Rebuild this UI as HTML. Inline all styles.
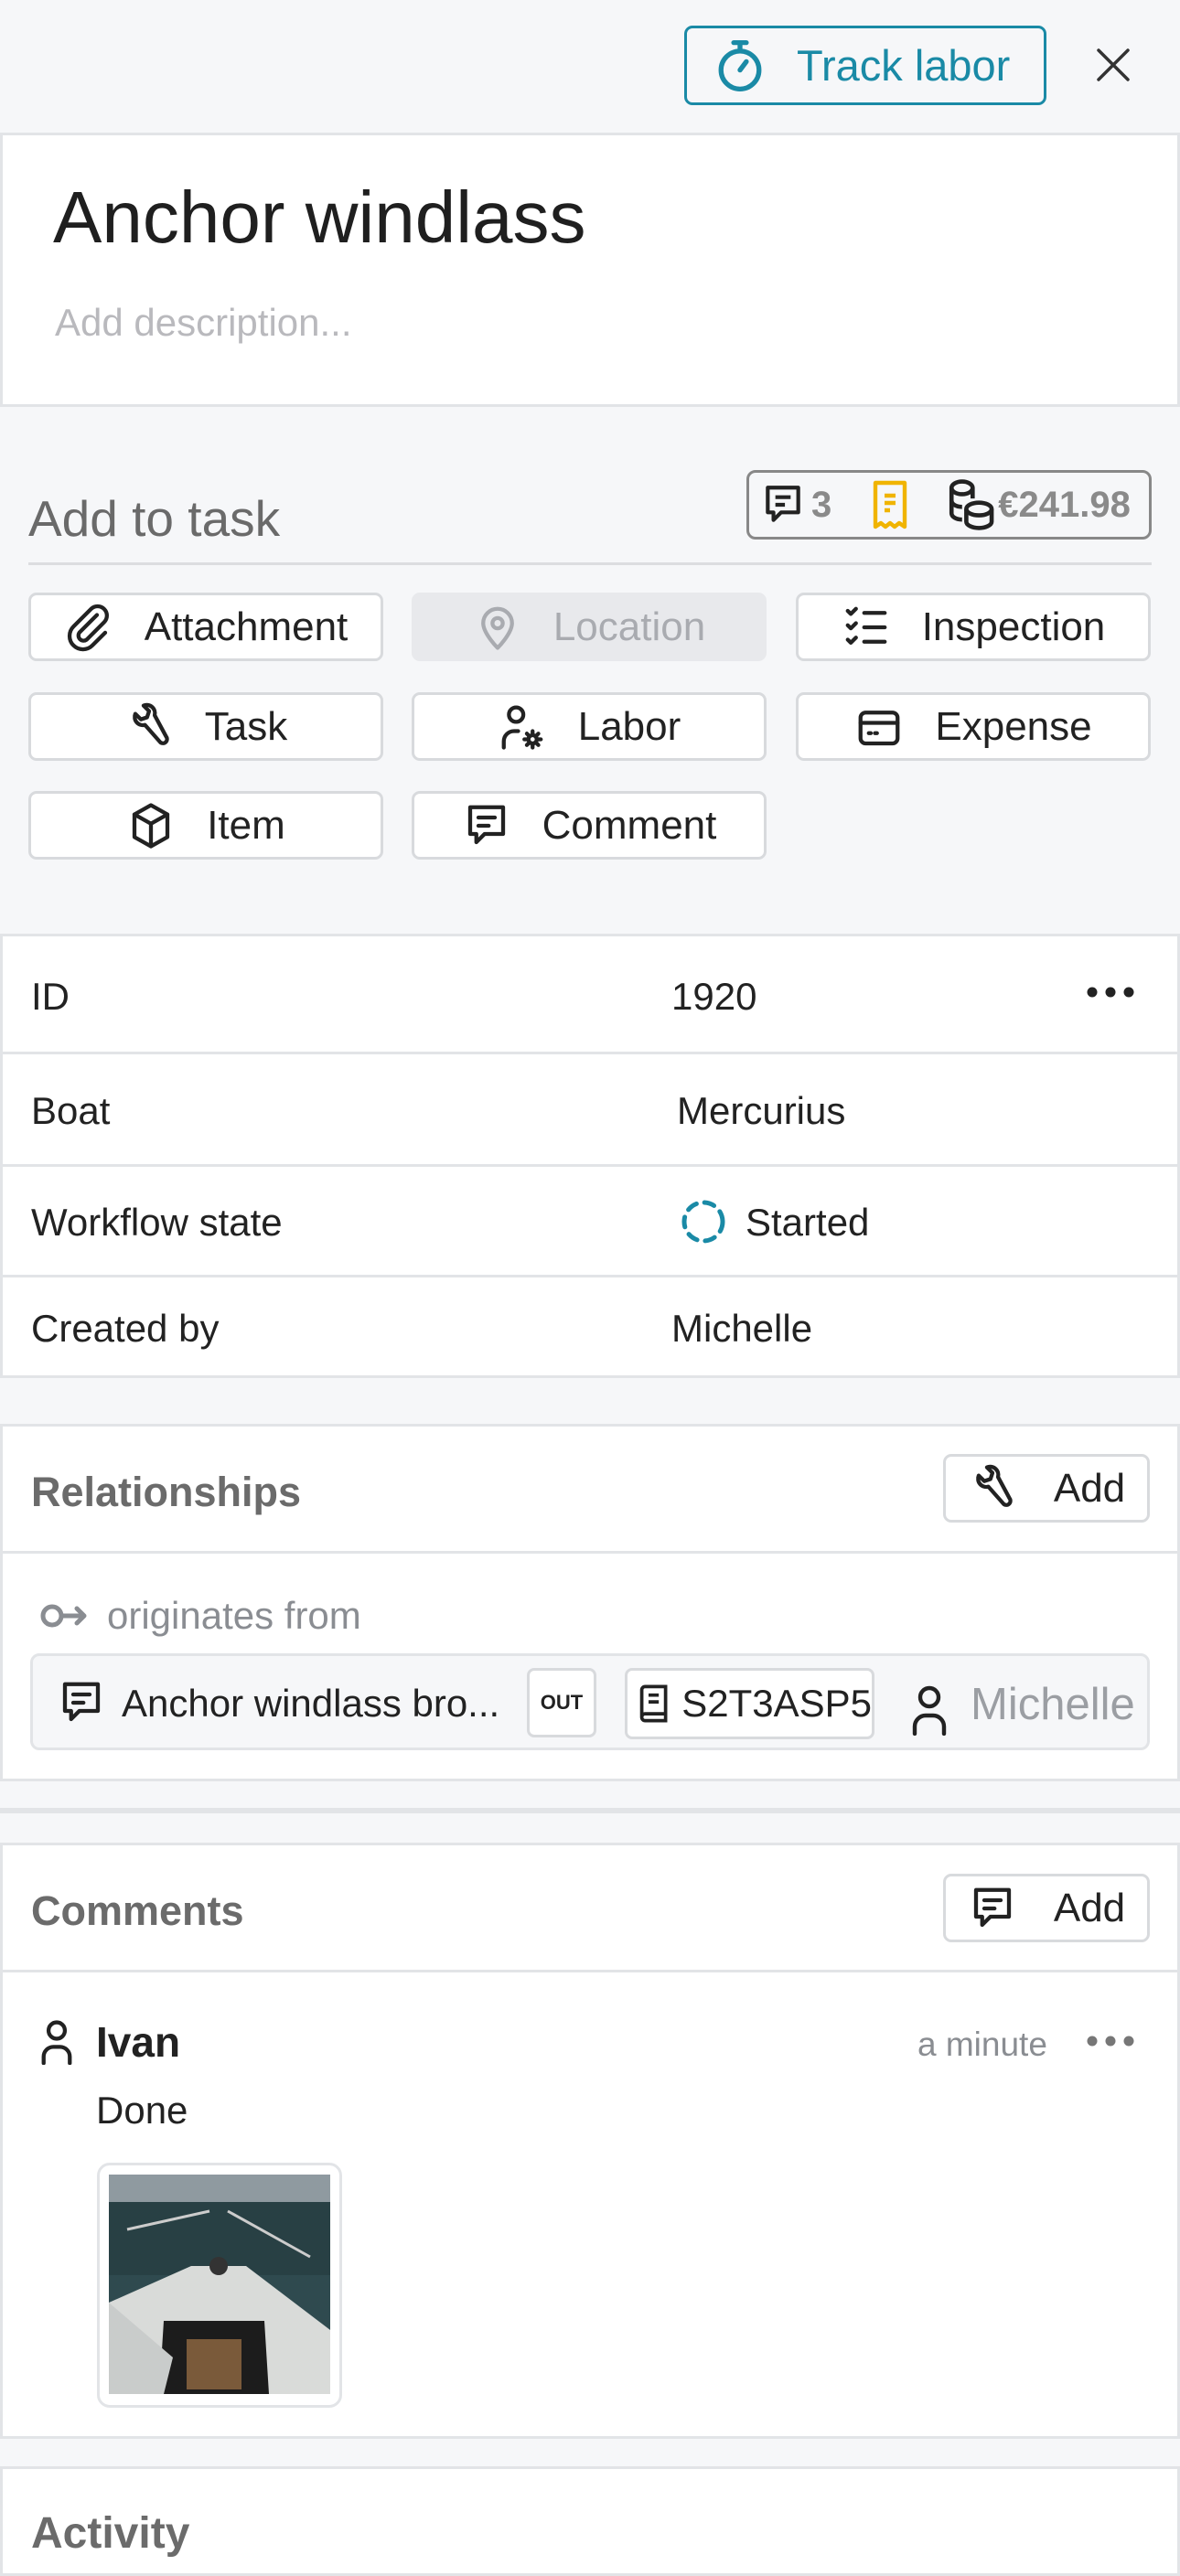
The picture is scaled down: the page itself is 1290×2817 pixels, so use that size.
<!DOCTYPE html>
<html><head><meta charset="utf-8"><style>
*{box-sizing:border-box;margin:0;padding:0}
body{width:1290px;height:2796px;background:#f6f7f9;font-family:"Liberation Sans",sans-serif;position:relative;overflow:hidden;color:#222}
.a{position:absolute}
.card{position:absolute;left:0;width:1290px;background:#fff;border:3px solid #e2e4e7}
.hl{position:absolute;left:0;width:1290px;height:3px;background:#e2e4e7}
.btn{position:absolute;height:75px;width:388px;background:#fff;border:3px solid #d8dadd;border-radius:9px;display:flex;align-items:center;justify-content:center;font-size:44px;color:#222;gap:34px}
.btn svg{width:54px;height:54px;fill:none;stroke:#222;stroke-width:1.9;stroke-linecap:round;stroke-linejoin:round}
.lbl{position:absolute;font-size:42px;color:#222;line-height:1}
.hd{position:absolute;font-size:45px;color:#6b6b6b;font-weight:bold;line-height:1}
svg.i{fill:none;stroke:#222;stroke-width:1.9;stroke-linecap:round;stroke-linejoin:round}
</style></head><body>

<!-- top bar -->
<div class="a" style="left:748px;top:28px;width:396px;height:87px;border:3px solid #1a8aa6;border-radius:9px;display:flex;align-items:center;padding-left:30px;gap:34px;color:#1a8aa6;font-size:47px">
<svg width="56" height="60" viewBox="0 0 24 26" fill="none" stroke="#1a8aa6" stroke-width="2.3" stroke-linecap="round"><path d="M9 2h6M12 2v3"/><circle cx="12" cy="15" r="9"/><path d="M12 15l3-4"/></svg>
<span>Track labor</span></div>
<svg class="a" style="left:1197px;top:51px" width="40" height="40" viewBox="0 0 40 40" stroke="#333" stroke-width="3.5" stroke-linecap="round"><path d="M4 4l32 32M36 4L4 36"/></svg>

<!-- title card -->
<div class="card" style="top:145px;height:300px"></div>
<div class="a" style="left:58px;top:198px;font-size:80px;color:#1f1f1f;line-height:1">Anchor windlass</div>
<div class="a" style="left:60px;top:332px;font-size:42px;color:#b9b9bd;line-height:1">Add description...</div>

<!-- add to task -->
<div class="a" style="left:31px;top:540px;font-size:55px;color:#6a6a6a;line-height:1">Add to task</div>
<div class="a" style="left:816px;top:514px;width:443px;height:76px;border:3px solid #888;border-radius:10px;background:#f6f7f9;display:flex;align-items:center;padding-left:12px;font-size:40px;font-weight:bold;color:#8a8a8a">
<svg width="50" height="52" viewBox="0 0 24 24" fill="none" stroke="#222" stroke-width="2" stroke-linejoin="round"><path d="M4 3h16v13h-9l-4 4v-4H4z"/><path d="M8 8h8M8 12h5"/></svg>
<span style="margin-left:6px">3</span>
<svg style="margin-left:44px" width="40" height="56" viewBox="0 0 20 28" fill="none" stroke="#f0b400" stroke-width="2.2" stroke-linejoin="round"><path d="M2 2h16v24l-3-2-2.5 2-2.5-2-2.5 2L5 24l-3 2z"/><path d="M7 9h6M7 13h6M7 17h3"/></svg>
<svg style="margin-left:40px" width="56" height="60" viewBox="0 0 24 26" fill="none" stroke="#222" stroke-width="2"><ellipse cx="8" cy="5" rx="5" ry="3"/><path d="M3 5v12c0 1.6 2 3 5 3M13 5v5"/><path d="M3 11c0 1.6 2 3 5 3"/><ellipse cx="16" cy="15" rx="6" ry="3"/><path d="M10 15v6c0 1.6 2.7 3 6 3s6-1.4 6-3v-6"/></svg>
<span style="margin-left:2px">€241.98</span></div>
<div class="a" style="left:31px;top:615px;width:1228px;height:3px;background:#dcdde0"></div>

<div class="btn" style="left:31px;top:648px"><svg viewBox="0 0 24 24"><path d="M16 6l-8.5 8.5a2.5 2.5 0 003.5 3.5l8.5-8.5a4.5 4.5 0 00-6.4-6.4L4.6 11.6a6.5 6.5 0 009.2 9.2L20 14.6"/></svg><span>Attachment</span></div>
<div class="btn" style="left:450px;top:648px;background:#e8e9ec;border-color:#e8e9ec;color:#a9abb0"><svg viewBox="0 0 24 24" style="stroke:#a9abb0"><path d="M12 22s-7-7-7-12a7 7 0 0114 0c0 5-7 12-7 12z"/><circle cx="12" cy="10" r="2.5"/></svg><span>Location</span></div>
<div class="btn" style="left:870px;top:648px"><svg viewBox="0 0 24 24"><path d="M3 4l1.5 1.5L7 3M3 11l1.5 1.5L7 10M3 18l1.5 1.5L7 17M11 5h10M11 12h10M11 19h10"/></svg><span>Inspection</span></div>
<div class="btn" style="left:31px;top:757px"><svg viewBox="0 0 24 24"><path d="M14.7 6.3a4 4 0 00-5.4-4.7l2.7 2.7-1 3-3 1-2.7-2.7a4 4 0 004.7 5.4l7.5 8.5a2 2 0 002.8-2.8z"/></svg><span>Task</span></div>
<div class="btn" style="left:450px;top:757px"><svg viewBox="0 0 24 24"><circle cx="9" cy="6" r="3.5"/><path d="M3 22v-3a5 5 0 015-5h2"/><circle cx="17" cy="18" r="2"/><path d="M17 14v1.5M17 20.5V22M13 18h1.5M19.5 18H21M14.2 15.2l1 1M18.8 19.8l1 1M14.2 20.8l1-1M18.8 16.2l1-1"/></svg><span>Labor</span></div>
<div class="btn" style="left:870px;top:757px"><svg viewBox="0 0 24 24"><rect x="3" y="5" width="18" height="15" rx="2.5"/><path d="M3 10h18M7 15h1M10 15h1"/></svg><span>Expense</span></div>
<div class="btn" style="left:31px;top:865px"><svg viewBox="0 0 24 24"><path d="M12 2l8 4.5v11L12 22l-8-4.5v-11z"/><path d="M4 6.5l8 4.5 8-4.5M12 11v11"/></svg><span>Item</span></div>
<div class="btn" style="left:450px;top:865px"><svg viewBox="0 0 24 24"><path d="M4 3h16v13h-9l-4 4v-4H4z"/><path d="M8 8h8M8 12h5"/></svg><span>Comment</span></div>

<!-- details -->
<div class="card" style="top:1021px;height:486px"></div>
<div class="hl" style="top:1150px"></div>
<div class="hl" style="top:1273px"></div>
<div class="hl" style="top:1394px"></div>
<div class="lbl" style="left:34px;top:1069px">ID</div>
<div class="lbl" style="left:734px;top:1069px">1920</div>
<svg class="a" style="left:1186px;top:1077px" width="56" height="16"><circle cx="8" cy="8" r="5.5" fill="#222"/><circle cx="28" cy="8" r="5.5" fill="#222"/><circle cx="48" cy="8" r="5.5" fill="#222"/></svg>
<div class="lbl" style="left:34px;top:1194px">Boat</div>
<div class="lbl" style="left:740px;top:1194px">Mercurius</div>
<div class="lbl" style="left:34px;top:1316px">Workflow state</div>
<svg class="a" style="left:743px;top:1310px" width="52" height="52" viewBox="0 0 52 52"><circle cx="26" cy="26" r="21" fill="none" stroke="#1a8aa6" stroke-width="5" stroke-dasharray="11 9" stroke-linecap="round"/></svg>
<div class="lbl" style="left:815px;top:1316px">Started</div>
<div class="lbl" style="left:34px;top:1432px">Created by</div>
<div class="lbl" style="left:734px;top:1432px">Michelle</div>

<!-- relationships -->
<div class="card" style="top:1557px;height:391px"></div>
<div class="hl" style="top:1696px"></div>
<div class="hd" style="left:34px;top:1609px">Relationships</div>
<div class="btn" style="left:1031px;top:1590px;width:226px;gap:40px"><svg viewBox="0 0 24 24"><path d="M14.7 6.3a4 4 0 00-5.4-4.7l2.7 2.7-1 3-3 1-2.7-2.7a4 4 0 004.7 5.4l7.5 8.5a2 2 0 002.8-2.8z"/></svg><span>Add</span></div>
<svg class="a" style="left:42px;top:1752px" width="56" height="30" viewBox="0 0 56 30" fill="none" stroke="#8a8d92" stroke-width="5" stroke-linecap="round" stroke-linejoin="round"><circle cx="15" cy="15" r="10"/><path d="M25 15h25M42 7l8 8-8 8"/></svg>
<div class="a" style="left:117px;top:1746px;font-size:42px;color:#8a8d92;line-height:1">originates from</div>
<div class="a" style="left:33px;top:1808px;width:1224px;height:106px;border:3px solid #e2e4e7;border-radius:10px;background:#f6f7f9"></div>
<svg class="a i" style="left:62px;top:1835px" width="54" height="54" viewBox="0 0 24 24"><path d="M4 3h16v13h-9l-4 4v-4H4z"/><path d="M8 8h8M8 12h5"/></svg>
<div class="a" style="left:133px;top:1842px;font-size:42px;line-height:1;white-space:nowrap">Anchor windlass bro...</div>
<div class="a" style="left:576px;top:1824px;width:76px;height:76px;border:3px solid #d8dadd;border-radius:8px;background:#fff;font-size:22px;font-weight:bold;display:flex;align-items:center;justify-content:center">OUT</div>
<div class="a" style="left:683px;top:1824px;width:273px;height:78px;border:3px solid #d8dadd;border-radius:8px;background:#fff;display:flex;align-items:center;padding-left:10px;gap:12px;font-size:42px;white-space:nowrap;overflow:hidden">
<svg width="38" height="44" viewBox="0 0 20 22" fill="none" stroke="#222" stroke-width="2"><path d="M3 3a2 2 0 012-2h12v16H5a2 2 0 00-2 2zM3 19a2 2 0 002 2h12v-4"/><path d="M7 6h6M7 10h6"/></svg><span>S2T3ASP5</span></div>
<svg class="a" style="left:996px;top:1842px" width="40" height="56" viewBox="0 0 20 28" fill="none" stroke="#222" stroke-width="2.2" stroke-linecap="round"><circle cx="10" cy="7" r="5"/><path d="M2 27v-4a6 6 0 016-6h4a6 6 0 016 6v4"/></svg>
<div class="a" style="left:1061px;top:1840px;font-size:49px;color:#9b9ea3;line-height:1">Michelle</div>

<div class="a" style="left:0;top:1977px;width:1290px;height:6px;background:#e2e4e7"></div>

<!-- comments -->
<div class="card" style="top:2015px;height:652px"></div>
<div class="hl" style="top:2154px"></div>
<div class="hd" style="left:34px;top:2067px">Comments</div>
<div class="btn" style="left:1031px;top:2049px;width:226px;gap:40px"><svg viewBox="0 0 24 24"><path d="M4 3h16v13h-9l-4 4v-4H4z"/><path d="M8 8h8M8 12h5"/></svg><span>Add</span></div>
<svg class="a" style="left:44px;top:2208px" width="36" height="50" viewBox="0 0 20 28" fill="none" stroke="#222" stroke-width="2.4" stroke-linecap="round"><circle cx="10" cy="7" r="5"/><path d="M2 27v-4a6 6 0 016-6h4a6 6 0 016 6v4"/></svg>
<div class="a" style="left:105px;top:2210px;font-size:46px;font-weight:bold;line-height:1">Ivan</div>
<div class="a" style="left:1003px;top:2217px;font-size:37px;color:#8a8d92;line-height:1">a minute</div>
<svg class="a" style="left:1186px;top:2224px" width="56" height="16"><circle cx="8" cy="8" r="5.5" fill="#777"/><circle cx="28" cy="8" r="5.5" fill="#777"/><circle cx="48" cy="8" r="5.5" fill="#777"/></svg>
<div class="a" style="left:105px;top:2287px;font-size:42px;line-height:1">Done</div>
<div class="a" style="left:106px;top:2365px;width:268px;height:268px;border:3px solid #e2e4e7;border-radius:14px;background:#fff"></div>
<svg class="a" style="left:119px;top:2378px" width="242" height="240" viewBox="0 0 242 240">
<rect width="242" height="240" fill="#2f4a4f"/>
<rect width="242" height="40" fill="#8f9aa0"/>
<rect x="0" y="30" width="242" height="80" fill="#284044"/>
<path d="M0 140 L90 100 L150 100 L242 170 L242 240 L0 240z" fill="#d9dbd9"/>
<path d="M60 160 L170 160 L175 240 L55 240z" fill="#1c1c1c"/>
<rect x="85" y="180" width="60" height="55" fill="#7a5a3a"/>
<path d="M0 140 L70 200 L60 240 L0 240z" fill="#c9cccb"/>
<path d="M20 60 L110 40 M130 40 L220 90" stroke="#ccc" stroke-width="3"/>
<circle cx="120" cy="100" r="10" fill="#333"/>
</svg>

<!-- activity -->
<div class="card" style="top:2697px;height:120px"></div>
<div class="hd" style="left:34px;top:2747px;font-size:48px">Activity</div>
</body></html>
